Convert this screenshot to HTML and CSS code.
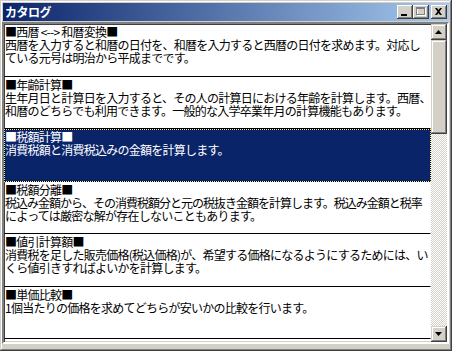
FILE: index.html
```html
<!DOCTYPE html>
<html lang="ja">
<head>
<meta charset="utf-8">
<title>カタログ</title>
<link rel="stylesheet" href="styles.css">
</head>
<body>
<div class="window">
  <div class="titlebar">
    <span class="title">カタログ</span>
    <div class="tbtns">
      <div class="tbtn">
        <svg width="16" height="14" viewBox="0 0 16 14"><rect x="4" y="9" width="6" height="2" fill="#000"/></svg>
      </div>
      <div class="tbtn">
        <svg width="16" height="14" viewBox="0 0 16 14">
          <rect x="4.5" y="3.5" width="8" height="7" fill="none" stroke="#fff"/>
          <rect x="3.5" y="2.5" width="8" height="7" fill="none" stroke="#808080"/>
          <rect x="4" y="3" width="7" height="1" fill="#808080"/>
        </svg>
      </div>
      <div class="tbtn close">
        <svg width="16" height="14" viewBox="0 0 16 14"><path d="M4 3h2l1.5 2 1.5-2h2l-2.5 3.5 2.5 3.5h-2l-1.5-2-1.5 2h-2l2.5-3.5z" fill="#000"/></svg>
      </div>
    </div>
  </div>
  <div class="listbox">
    <div class="items">
      <div class="item odd">
        <div class="line">■西暦 &lt;--&gt; 和暦変換■</div>
        <div class="line">西暦を入力すると和暦の日付を、和暦を入力すると西暦の日付を求めます。対応し</div>
        <div class="line">ている元号は明治から平成までです。</div>
      </div>
      <div class="item">
        <div class="line">■年齢計算■</div>
        <div class="line">生年月日と計算日を入力すると、その人の計算日における年齢を計算します。西暦、</div>
        <div class="line">和暦のどちらでも利用できます。一般的な入学卒業年月の計算機能もあります。</div>
      </div>
      <div class="item odd selected">
        <div class="line">■税額計算■</div>
        <div class="line">消費税額と消費税込みの金額を計算します。</div>
      </div>
      <div class="item">
        <div class="line">■税額分離■</div>
        <div class="line tight">税込み金額から、その消費税額分と元の税抜き金額を計算します。税込み金額と税率</div>
        <div class="line">によっては厳密な解が存在しないこともあります。</div>
      </div>
      <div class="item odd">
        <div class="line">■値引計算額■</div>
        <div class="line">消費税を足した販売価格(税込価格)が、希望する価格になるようにするためには、い</div>
        <div class="line">くら値引きすればよいかを計算します。</div>
      </div>
      <div class="item">
        <div class="line">■単価比較■</div>
        <div class="line">1個当たりの価格を求めてどちらが安いかの比較を行います。</div>
      </div>
    </div>
    <div class="scrollbar">
      <div class="sbtn">
        <svg width="16" height="16" viewBox="0 0 16 16"><path d="M4 10h7l-3.5-4z" fill="#000"/></svg>
      </div>
      <div class="track">
        <div class="thumb"></div>
      </div>
      <div class="sbtn">
        <svg width="16" height="16" viewBox="0 0 16 16"><path d="M4 6h7l-3.5 4z" fill="#000"/></svg>
      </div>
    </div>
  </div>
</div>
</body>
</html>
```

FILE: styles.css
```css
* { box-sizing: border-box; }
html, body { margin: 0; padding: 0; }
body {
  width: 452px;
  height: 351px;
  overflow: hidden;
  background: #d4d0c8;
  font-family: "Noto Sans CJK JP", "Noto Sans", sans-serif;
}
.window {
  width: 452px;
  height: 351px;
  background: #d4d0c8;
  padding: 3px 3px 3px 2px;
  display: flex;
  flex-direction: column;
  box-shadow: inset -1px -1px #404040, inset 1px 1px #d4d0c8, inset -2px -2px #808080, inset 2px 2px #fff;
}
.titlebar {
  height: 18px;
  margin-left: 1px;
  background: linear-gradient(to right, #0a246a, #a6caf0);
  display: flex;
  align-items: center;
  justify-content: space-between;
  padding: 0 2px 0 2px;
}
.title {
  color: #fff;
  font-weight: bold;
  font-size: 12px;
  line-height: 14px;
  letter-spacing: -0.5px;
}
.tbtns {
  display: flex;
  gap: 0;
}
.tbtn {
  width: 16px;
  height: 14px;
  background: #d4d0c8;
  box-shadow: inset -1px -1px #404040, inset 1px 1px #fff, inset -2px -2px #808080;
}
.tbtn svg { display: block; }
.tbtn.close { margin-left: 2px; }
.listbox {
  margin-top: 1px;
  height: 322px;
  display: flex;
  background: #fff;
  border: 2px solid;
  border-color: #808080 #fff #fff #808080;
  box-shadow: inset 1px 1px #404040, inset -1px -1px #d4d0c8;
}
.items {
  flex: 1;
  overflow: hidden;
  color: #000;
  font-size: 12px;
  line-height: 13px;
  letter-spacing: -0.75px;
}
.item {
  height: 52px;
  border: 1px solid transparent;
  border-bottom: 1px solid #000;
  white-space: nowrap;
  overflow: hidden;
}
.item.odd { height: 53px; }
.item.selected {
  color: #fff;
  border: 1px dotted #efe6a8;
  background: linear-gradient(#0a246a, #0a246a) padding-box, linear-gradient(#000, #000) border-box;
}
.line { height: 13px; }
.line.tight { letter-spacing: -1px; }
.scrollbar {
  width: 16px;
  display: flex;
  flex-direction: column;
}
.sbtn {
  width: 16px;
  height: 16px;
  background: #d4d0c8;
  box-shadow: inset -1px -1px #404040, inset 1px 1px #d4d0c8, inset -2px -2px #808080, inset 2px 2px #fff;
}
.sbtn svg { display: block; }
.track {
  flex: 1;
  background-image: conic-gradient(#fff 25%, #d4d0c8 0 50%, #fff 0 75%, #d4d0c8 0);
  background-size: 2px 2px;
}
.thumb {
  height: 94px;
  background: #d4d0c8;
  box-shadow: inset -1px -1px #404040, inset 1px 1px #d4d0c8, inset -2px -2px #808080, inset 2px 2px #fff;
}
```
